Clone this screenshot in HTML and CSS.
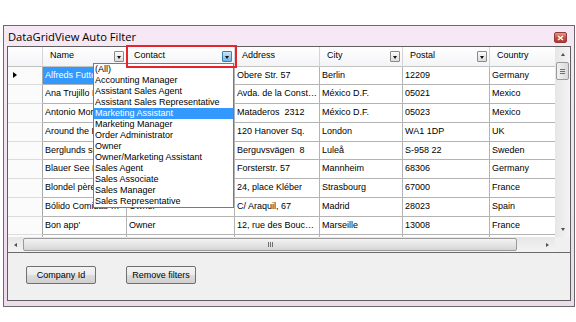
FILE: index.html
```html
<!DOCTYPE html>
<html lang="en">
<head>
    <meta charset="UTF-8">
    <title>DataGridView Auto Filter</title>
    <link rel="stylesheet" href="styles.css">
</head>
<body>

    <div class="window">
        <div class="titlebar">
            <span class="title">DataGridView Auto Filter</span>
            <span class="close-btn">
                <svg width="7" height="6" viewBox="0 0 7 6"><path d="M1 1 L6 5 M6 1 L1 5" stroke="#fff" stroke-width="1.6"/></svg>
            </span>
        </div>

        <div class="client">
            <div class="grid-view">
                <div class="gv-main">
                    <div class="gv-cells">
                        <div class="gv-row gv-head">
                            <div class="cell rh"></div>
                            <div class="cell hc"><span>Name</span><i class="drop"></i></div>
                            <div class="cell hc"><span>Contact</span><i class="drop active"></i></div>
                            <div class="cell hc"><span>Address</span></div>
                            <div class="cell hc"><span>City</span><i class="drop"></i></div>
                            <div class="cell hc"><span>Postal</span><i class="drop"></i></div>
                            <div class="cell hc"><span>Country</span><i class="drop"></i></div>
                        </div>
                        <div class="gv-row">
                            <div class="cell rh"><i class="current"></i></div>
                            <div class="cell sel">Alfreds Futterkiste</div>
                            <div class="cell"></div>
                            <div class="cell">Obere Str. 57</div>
                            <div class="cell">Berlin</div>
                            <div class="cell">12209</div>
                            <div class="cell">Germany</div>
                        </div>
                        <div class="gv-row">
                            <div class="cell rh"></div>
                            <div class="cell">Ana Trujillo Emparedados y helados</div>
                            <div class="cell"></div>
                            <div class="cell">Avda. de la Constitución 2222</div>
                            <div class="cell">México D.F.</div>
                            <div class="cell">05021</div>
                            <div class="cell">Mexico</div>
                        </div>
                        <div class="gv-row">
                            <div class="cell rh"></div>
                            <div class="cell">Antonio Moreno Taquería</div>
                            <div class="cell"></div>
                            <div class="cell">Mataderos&nbsp; 2312</div>
                            <div class="cell">México D.F.</div>
                            <div class="cell">05023</div>
                            <div class="cell">Mexico</div>
                        </div>
                        <div class="gv-row">
                            <div class="cell rh"></div>
                            <div class="cell">Around the Horn</div>
                            <div class="cell"></div>
                            <div class="cell">120 Hanover Sq.</div>
                            <div class="cell">London</div>
                            <div class="cell">WA1 1DP</div>
                            <div class="cell">UK</div>
                        </div>
                        <div class="gv-row">
                            <div class="cell rh"></div>
                            <div class="cell">Berglunds snabbköp</div>
                            <div class="cell"></div>
                            <div class="cell">Berguvsvägen&nbsp; 8</div>
                            <div class="cell">Luleå</div>
                            <div class="cell">S-958 22</div>
                            <div class="cell">Sweden</div>
                        </div>
                        <div class="gv-row">
                            <div class="cell rh"></div>
                            <div class="cell">Blauer See Delikatessen</div>
                            <div class="cell"></div>
                            <div class="cell">Forsterstr. 57</div>
                            <div class="cell">Mannheim</div>
                            <div class="cell">68306</div>
                            <div class="cell">Germany</div>
                        </div>
                        <div class="gv-row">
                            <div class="cell rh"></div>
                            <div class="cell">Blondel père et fils</div>
                            <div class="cell"></div>
                            <div class="cell">24, place Kléber</div>
                            <div class="cell">Strasbourg</div>
                            <div class="cell">67000</div>
                            <div class="cell">France</div>
                        </div>
                        <div class="gv-row">
                            <div class="cell rh"></div>
                            <div class="cell">Bólido Comidas preparadas</div>
                            <div class="cell">Owner</div>
                            <div class="cell">C/ Araquil, 67</div>
                            <div class="cell">Madrid</div>
                            <div class="cell">28023</div>
                            <div class="cell">Spain</div>
                        </div>
                        <div class="gv-row">
                            <div class="cell rh"></div>
                            <div class="cell">Bon app'</div>
                            <div class="cell">Owner</div>
                            <div class="cell">12, rue des Bouchers</div>
                            <div class="cell">Marseille</div>
                            <div class="cell">13008</div>
                            <div class="cell">France</div>
                        </div>
                        <div class="gv-row">
                            <div class="cell rh"></div>
                            <div class="cell"></div>
                            <div class="cell"></div>
                            <div class="cell"></div>
                            <div class="cell"></div>
                            <div class="cell"></div>
                            <div class="cell"></div>
                        </div>
                    </div>

                    <div class="vscroll">
                        <div class="sb-btn"><i class="arr up"></i></div>
                        <div class="thumb v-thumb"><i class="grip"></i></div>
                        <div class="sb-track"></div>
                        <div class="sb-btn"><i class="arr down"></i></div>
                    </div>
                </div>

                <div class="hscroll">
                    <div class="hbar">
                        <div class="sb-btn"><i class="arr left"></i></div>
                        <div class="thumb h-thumb"><i class="grip"></i></div>
                        <div class="sb-track"></div>
                        <div class="sb-btn"><i class="arr right"></i></div>
                    </div>
                    <div class="corner"></div>
                </div>

                <!-- filter popup opened from the Contact header -->
                <div class="filter-mark"></div>
                <ul class="filter-list">
                    <li>(All)</li>
                    <li>Accounting Manager</li>
                    <li>Assistant Sales Agent</li>
                    <li>Assistant Sales Representative</li>
                    <li class="picked">Marketing Assistant</li>
                    <li>Marketing Manager</li>
                    <li>Order Administrator</li>
                    <li>Owner</li>
                    <li>Owner/Marketing Assistant</li>
                    <li>Sales Agent</li>
                    <li>Sales Associate</li>
                    <li>Sales Manager</li>
                    <li>Sales Representative</li>
                </ul>
            </div>

            <div class="actions">
                <button class="win-button">Company Id</button>
                <button class="win-button">Remove filters</button>
            </div>
        </div>
    </div>

</body>
</html>
```

FILE: styles.css
```css
body {
    margin: 0;
    background-color: #fff;
    font-family: 'Liberation Sans', Arial, sans-serif;
    width: 576px;
    height: 322px;
    overflow: hidden;
}

.window {
    margin: 25px 0 0 3px;
    width: 572px;
    height: 282px;
    box-sizing: border-box;
    border: 1px solid #6a6a6a;
    background: linear-gradient(#f6e8f4, #eedbec);
    padding: 0 3px 5px 3px;
}

.titlebar {
    height: 20px;
    display: flex;
    align-items: center;
    justify-content: space-between;
}

.title {
    font-family: 'Open Sans', 'Liberation Sans', sans-serif;
    font-size: 11.2px;
    color: #000;
    padding-left: 1px;
}

.close-btn {
    width: 11px;
    height: 9px;
    margin-right: 4px;
    margin-top: 3px;
    border: 1px solid #8e3b34;
    border-radius: 2px;
    background: linear-gradient(#e19a8f, #c9493c 55%, #b8382c);
    display: flex;
    align-items: center;
    justify-content: center;
}

.client {
    height: 255px;
    box-sizing: border-box;
    border: 1px solid #5f5f5f;
    background-color: #f0f0f0;
}

/* grid */

.grid-view {
    position: relative;
    border-bottom: 1px solid #6a6a6a;
    background-color: #fff;
    font-size: 9px;
    color: #000;
}

.gv-main {
    display: flex;
    height: 190px;
}

.gv-cells {
    width: 547px;
    overflow: hidden;
}

.gv-row {
    display: grid;
    grid-template-columns: 35px 84px 108px 85px 83px 87px 80px;
    height: 18.75px;
}

.gv-head {
    height: 19.5px;
    background: linear-gradient(#ffffff, #f2f3f5);
}

.cell {
    box-sizing: border-box;
    border-right: 1px solid #b3b3b3;
    border-bottom: 1px solid #b3b3b3;
    padding: 0 2px;
    line-height: 17.75px;
    white-space: nowrap;
    overflow: hidden;
    text-overflow: ellipsis;
}

.cell.sel {
    background-color: #3399ff;
    color: #fff;
}

.cell.rh {
    background-color: #fbfbfb;
    border-right-color: #a9a9a9;
    border-bottom-color: #dcdcdc;
    display: flex;
    align-items: center;
    padding-left: 5px;
}

.gv-head .cell {
    border-right-color: #d5d5d5;
    border-bottom-color: #c2c2c2;
    background: transparent;
}

.cell.hc {
    display: flex;
    align-items: center;
    justify-content: space-between;
    padding: 0 2px 0 7px;
}

.current {
    width: 0;
    height: 0;
    border-top: 3.5px solid transparent;
    border-bottom: 3.5px solid transparent;
    border-left: 4px solid #000;
}

.drop {
    width: 10px;
    height: 11px;
    box-sizing: border-box;
    border: 1px solid #8a8a8a;
    border-radius: 1px;
    background: linear-gradient(#fbfbfb, #dcdcdc);
    display: flex;
    align-items: flex-end;
    justify-content: center;
    padding-bottom: 2px;
    flex-shrink: 0;
}

.drop::after {
    content: "";
    border-left: 2.5px solid transparent;
    border-right: 2.5px solid transparent;
    border-top: 3px solid #111;
}

.drop.active {
    border-color: #3c7fb1;
    background: linear-gradient(#c8e6fb, #6fb3e6);
}

/* scrollbars */

.vscroll {
    width: 15px;
    display: flex;
    flex-direction: column;
    background: linear-gradient(90deg, #e6e6e6, #f4f4f4);
}

.sb-btn {
    width: 15px;
    height: 15px;
    display: flex;
    align-items: center;
    justify-content: center;
    flex-shrink: 0;
}

.sb-track {
    flex: 1;
}

.arr {
    width: 0;
    height: 0;
}

.arr.up {
    border-left: 2.5px solid transparent;
    border-right: 2.5px solid transparent;
    border-bottom: 3px solid #505050;
}

.arr.down {
    border-left: 2.5px solid transparent;
    border-right: 2.5px solid transparent;
    border-top: 3px solid #505050;
}

.arr.left {
    border-top: 2.5px solid transparent;
    border-bottom: 2.5px solid transparent;
    border-right: 3px solid #505050;
}

.arr.right {
    border-top: 2.5px solid transparent;
    border-bottom: 2.5px solid transparent;
    border-left: 3px solid #505050;
}

.thumb {
    box-sizing: border-box;
    border: 1px solid #9a9a9a;
    border-radius: 2px;
    display: flex;
    align-items: center;
    justify-content: center;
}

.v-thumb {
    height: 18px;
    margin: 0 1px;
    background: linear-gradient(90deg, #f1f1f1, #dadada);
}

.v-thumb .grip {
    width: 5px;
    height: 5px;
    background: repeating-linear-gradient(#6e6e6e 0 1px, transparent 1px 2px);
}

.hscroll {
    display: flex;
    height: 15px;
}

.hbar {
    width: 547px;
    display: flex;
    background: linear-gradient(#e6e6e6, #f4f4f4);
}

.h-thumb {
    width: 494px;
    margin: 1px 0;
    background: linear-gradient(#f3f3f3, #d6d6d6);
}

.h-thumb .grip {
    width: 5px;
    height: 5px;
    background: repeating-linear-gradient(90deg, #6e6e6e 0 1px, transparent 1px 2px);
}

.corner {
    width: 15px;
    background-color: #f0f0f0;
}

/* filter popup */

.filter-mark {
    position: absolute;
    left: 118px;
    top: -2px;
    width: 111px;
    height: 23px;
    box-sizing: border-box;
    border: 2px solid #e5252b;
    z-index: 3;
}

.filter-list {
    position: absolute;
    left: 85px;
    top: 16px;
    width: 141px;
    margin: 0;
    padding: 0;
    list-style: none;
    background-color: #fff;
    border: 1px solid #7a7a7a;
    box-sizing: border-box;
    font-size: 9px;
    z-index: 2;
}

.filter-list li {
    height: 11px;
    line-height: 11px;
    padding-left: 1px;
    white-space: nowrap;
}

.filter-list li.picked {
    background-color: #3399ff;
    color: #fff;
}

/* bottom buttons */

.actions {
    display: flex;
    gap: 30px;
    padding: 13px 0 0 18px;
}

.win-button {
    width: 70px;
    height: 18px;
    padding: 0;
    font-family: 'Liberation Sans', Arial, sans-serif;
    font-size: 9px;
    color: #000;
    border: 1px solid #707070;
    border-radius: 2px;
    background: linear-gradient(#f3f3f3, #ebebeb 50%, #dcdcdc 51%, #d0d0d0);
}
```
